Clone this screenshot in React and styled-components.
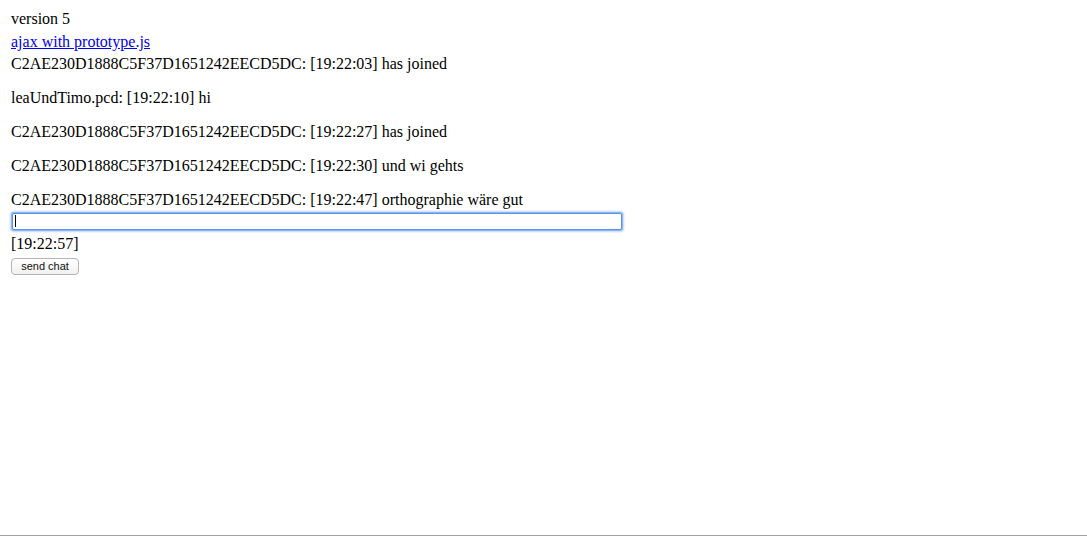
import styled, { createGlobalStyle } from 'styled-components';

const GlobalStyle = createGlobalStyle`
  html, body {
    margin: 0;
    padding: 0;
    background: #fff;
  }
  body {
    font-family: "Liberation Serif", "Times New Roman", serif;
    font-size: 16px;
    color: #000;
  }
`;

const Page = styled.div`
  box-sizing: border-box;
  height: 100vh;
  padding: 8px 11px 0;
  border-bottom: 1px solid #a3a3a3;
  display: flex;
  flex-direction: column;
  align-items: flex-start;
`;

const Line = styled.div`
  line-height: 22px;
  white-space: nowrap;
`;

const Link = styled.a`
  color: #0000ee;
  text-decoration: underline;
  line-height: 23px;
`;

const Messages = styled.div`
  display: flex;
  flex-direction: column;
  gap: 12px;
`;

const InputWrap = styled.div`
  position: relative;
  margin-top: 1px;
  margin-left: 1px;
`;

const ChatInput = styled.input`
  box-sizing: border-box;
  width: 610px;
  height: 17px;
  margin: 0;
  padding: 0 3px;
  border: 1px solid #5d95e6;
  border-radius: 2px;
  outline: none;
  box-shadow: 0 0 0 1px #8cb6f0, 0 0 2px 2px rgba(120, 165, 235, 0.45);
  font: 13px "Liberation Sans", Arial, sans-serif;
  caret-color: transparent;
`;

const Caret = styled.span`
  position: absolute;
  left: 3px;
  top: 3px;
  width: 1px;
  height: 12px;
  background: #000;
`;

const Stamp = styled(Line)`
  margin-top: 3px;
`;

const SendButton = styled.button`
  box-sizing: border-box;
  margin-top: 3px;
  width: 68px;
  height: 17px;
  padding: 0;
  border: 1px solid #b4b4b4;
  border-radius: 4px;
  background: linear-gradient(#ffffff, #f1f1f1);
  font: 11px "Liberation Sans", Arial, sans-serif;
  color: #111;
  line-height: 15px;
`;

const messages = [
  'C2AE230D1888C5F37D1651242EECD5DC: [19:22:03] has joined',
  'leaUndTimo.pcd: [19:22:10] hi',
  'C2AE230D1888C5F37D1651242EECD5DC: [19:22:27] has joined',
  'C2AE230D1888C5F37D1651242EECD5DC: [19:22:30] und wi gehts',
  'C2AE230D1888C5F37D1651242EECD5DC: [19:22:47] orthographie wäre gut',
];

export default function App() {
  return (
    <>
      <GlobalStyle />
      <Page>
        <Line>version 5</Line>
        <Link href="#">ajax with prototype.js</Link>
        <Messages>
          {messages.map((m, i) => (
            <Line key={i}>{m}</Line>
          ))}
        </Messages>
        <InputWrap>
          <ChatInput type="text" />
          <Caret />
        </InputWrap>
        <Stamp>[19:22:57]</Stamp>
        <SendButton>send chat</SendButton>
      </Page>
    </>
  );
}
